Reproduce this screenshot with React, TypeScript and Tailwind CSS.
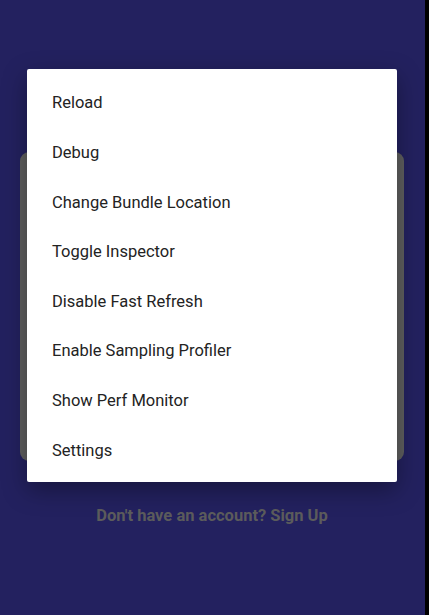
const ITEMS = [
  'Reload',
  'Debug',
  'Change Bundle Location',
  'Toggle Inspector',
  'Disable Fast Refresh',
  'Enable Sampling Profiler',
  'Show Perf Monitor',
  'Settings',
];

export default function App() {
  return (
    <div className="flex w-[429px] h-[615px] overflow-hidden" style={{ fontFamily: 'Roboto, "Liberation Sans", sans-serif' }}>
      <div className="relative w-[425px] h-full bg-[#23215f] flex flex-col">
        {/* dimmed login card */}
        <div className="mt-[152px] ml-[20px] w-[384px] h-[309px] rounded-[9px] bg-[#5f5f5f]" />
        <p className="mt-[43px] ml-[20px] w-[384px] text-center text-[16.5px] leading-[24px] font-bold text-[#5c5c5c]">
          Don't have an account? Sign Up
        </p>

        {/* dev menu dialog */}
        <div className="absolute left-[27px] top-[69px] w-[370px] h-[413px] bg-white rounded-[2px] py-[8px] shadow-[0_8px_24px_rgba(0,0,0,0.35)]">
          {ITEMS.map((label) => (
            <div key={label} className="h-[49.6px] flex items-center pl-[25px] pt-[4px] text-[16.5px] text-[#232323]">
              {label}
            </div>
          ))}
        </div>
      </div>
      <div className="w-[4px] h-full bg-black" />
    </div>
  );
}
